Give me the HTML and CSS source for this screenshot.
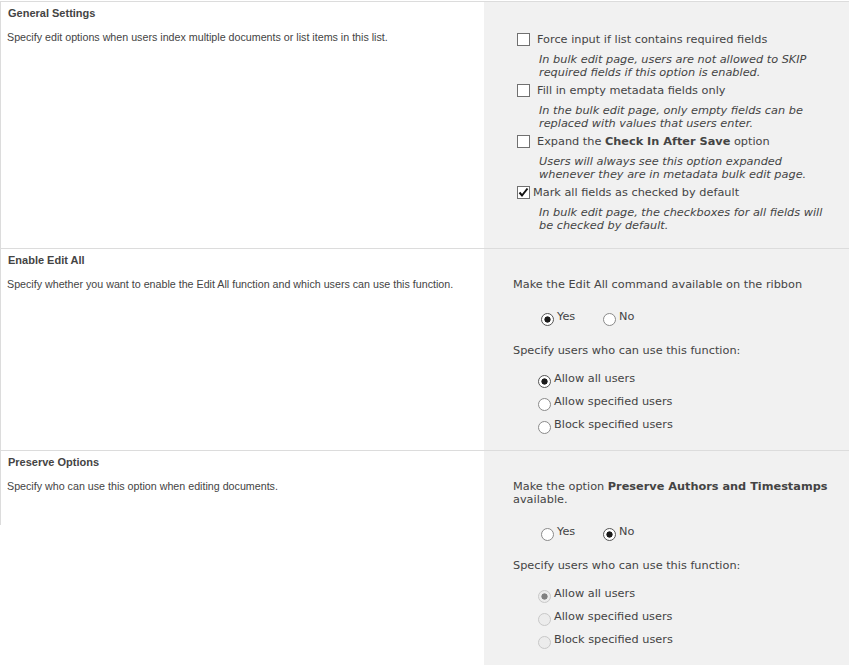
FILE: index.html
```html
<!DOCTYPE html>
<html lang="en">
<head>
    <meta charset="UTF-8">
    <title>Bulk edit settings</title>
    <link rel="stylesheet" href="styles.css">
</head>
<body>
<div class="settings">
    <!-- 常规设置 -->
    <section class="section">
        <div class="info">
            <h3>General Settings</h3>
            <p>Specify edit options when users index multiple documents or list items in this list.</p>
        </div>
        <div class="controls">
            <ul class="options">
                <li>
                    <label class="check-row"><span class="checkbox"></span><span>Force input if list contains required fields</span></label>
                    <p class="hint">In bulk edit page, users are not allowed to SKIP<br>required fields if this option is enabled.</p>
                </li>
                <li>
                    <label class="check-row"><span class="checkbox"></span><span>Fill in empty metadata fields only</span></label>
                    <p class="hint">In the bulk edit page, only empty fields can be<br>replaced with values that users enter.</p>
                </li>
                <li>
                    <label class="check-row"><span class="checkbox"></span><span>Expand the <b>Check In After Save</b> option</span></label>
                    <p class="hint">Users will always see this option expanded<br>whenever they are in metadata bulk edit page.</p>
                </li>
                <li>
                    <label class="check-row checked"><span class="checkbox"><svg width="11" height="11" viewBox="0 0 11 11"><path d="M1.5 5.5 L4 8.5 L9.5 1.5" fill="none" stroke="#111" stroke-width="2"/></svg></span><span>Mark all fields as checked by default</span></label>
                    <p class="hint">In bulk edit page, the checkboxes for all fields will<br>be checked by default.</p>
                </li>
            </ul>
        </div>
    </section>

    <!-- Edit All -->
    <section class="section">
        <div class="info">
            <h3>Enable Edit All</h3>
            <p>Specify whether you want to enable the Edit All function and which users can use this function.</p>
        </div>
        <div class="controls">
            <p class="prompt">Make the Edit All command available on the ribbon</p>
            <div class="choice-row">
                <label class="choice"><span class="radio on"></span>Yes</label>
                <label class="choice"><span class="radio"></span>No</label>
            </div>
            <p class="prompt spaced">Specify users who can use this function:</p>
            <ul class="radio-list">
                <li><span class="radio on"></span>Allow all users</li>
                <li><span class="radio"></span>Allow specified users</li>
                <li><span class="radio"></span>Block specified users</li>
            </ul>
        </div>
    </section>

    <!-- 保留选项 -->
    <section class="section last">
        <div class="info">
            <h3>Preserve Options</h3>
            <p>Specify who can use this option when editing documents.</p>
        </div>
        <div class="controls">
            <p class="prompt">Make the option <b>Preserve Authors and Timestamps</b><br>available.</p>
            <div class="choice-row">
                <label class="choice"><span class="radio"></span>Yes</label>
                <label class="choice"><span class="radio on"></span>No</label>
            </div>
            <p class="prompt spaced">Specify users who can use this function:</p>
            <ul class="radio-list">
                <li><span class="radio off on"></span>Allow all users</li>
                <li><span class="radio off"></span>Allow specified users</li>
                <li><span class="radio off"></span>Block specified users</li>
            </ul>
        </div>
    </section>
</div>
</body>
</html>
```

FILE: styles.css
```css
* {
    margin: 0;
    padding: 0
}

body {
    background: #fff;
    color: #444;
}

ul {
    list-style: none
}

.settings { /* 顶部分隔线 */
    margin-top: 1px;
    border-top: 1px solid #dcdcdc;
}

.section {
    display: grid;
    grid-template-columns: 484px 1fr;
    border-bottom: 1px solid #dcdcdc;
}

.info { /* 左侧说明 */
    border-left: 1px solid #dcdcdc;
    padding: 5px 6px;
    font-family: "Liberation Sans", Arial, sans-serif;
    font-size: 10.7px;
    line-height: 13px;
}

.info h3 {
    font-size: 11px;
    padding-left: 1px;
}

.info p {
    margin-top: 11px;
}

.section.last .info { /* 最后一栏左边框较短 */
    align-self: start;
    padding-bottom: 32px;
}

.controls { /* 右侧灰色区域 */
    background: #f1f1f1;
    padding: 29px 10px 16px 29px;
    font-family: "DejaVu Sans", Verdana, sans-serif;
    font-size: 11.3px;
    line-height: 13px;
}

.options {
    margin: 2px 0 0 4px;
    display: flex;
    flex-direction: column;
    gap: 5px;
}

.check-row {
    display: flex;
    align-items: flex-start;
}

.checkbox {
    flex: none;
    width: 11px;
    height: 11px;
    margin-right: 7px;
    border: 1px solid #707070;
    background: #fff;
}

.checkbox svg {
    display: block;
}

.check-row.checked .checkbox {
    margin-right: 3px;
}

.hint {
    margin: 7px 0 0 22px;
    font-style: italic;
}

.choice-row {
    display: flex;
    margin-top: 19px;
    padding-left: 28px;
}

.choice {
    display: flex;
    width: 62px;
}

.radio { /* 单选按钮 */
    flex: none;
    width: 11px;
    height: 11px;
    margin: 3px 3px 0 0;
    border: 1px solid #8a8a8a;
    border-radius: 50%;
    background: #fff;
}

.radio.on {
    border-color: #555;
    background: radial-gradient(circle, #1a1a1a 2.8px, #fff 3.4px);
}

.radio.off {
    border-color: #c8c8c8;
    background: #ececec;
}

.radio.off.on {
    background: radial-gradient(circle, #808080 2.8px, #ececec 3.4px);
}

.prompt.spaced {
    margin-top: 18px;
}

.radio-list {
    margin: 15px 0 0 25px;
    display: flex;
    flex-direction: column;
    gap: 7px;
}

.radio-list li {
    display: flex;
}
```
